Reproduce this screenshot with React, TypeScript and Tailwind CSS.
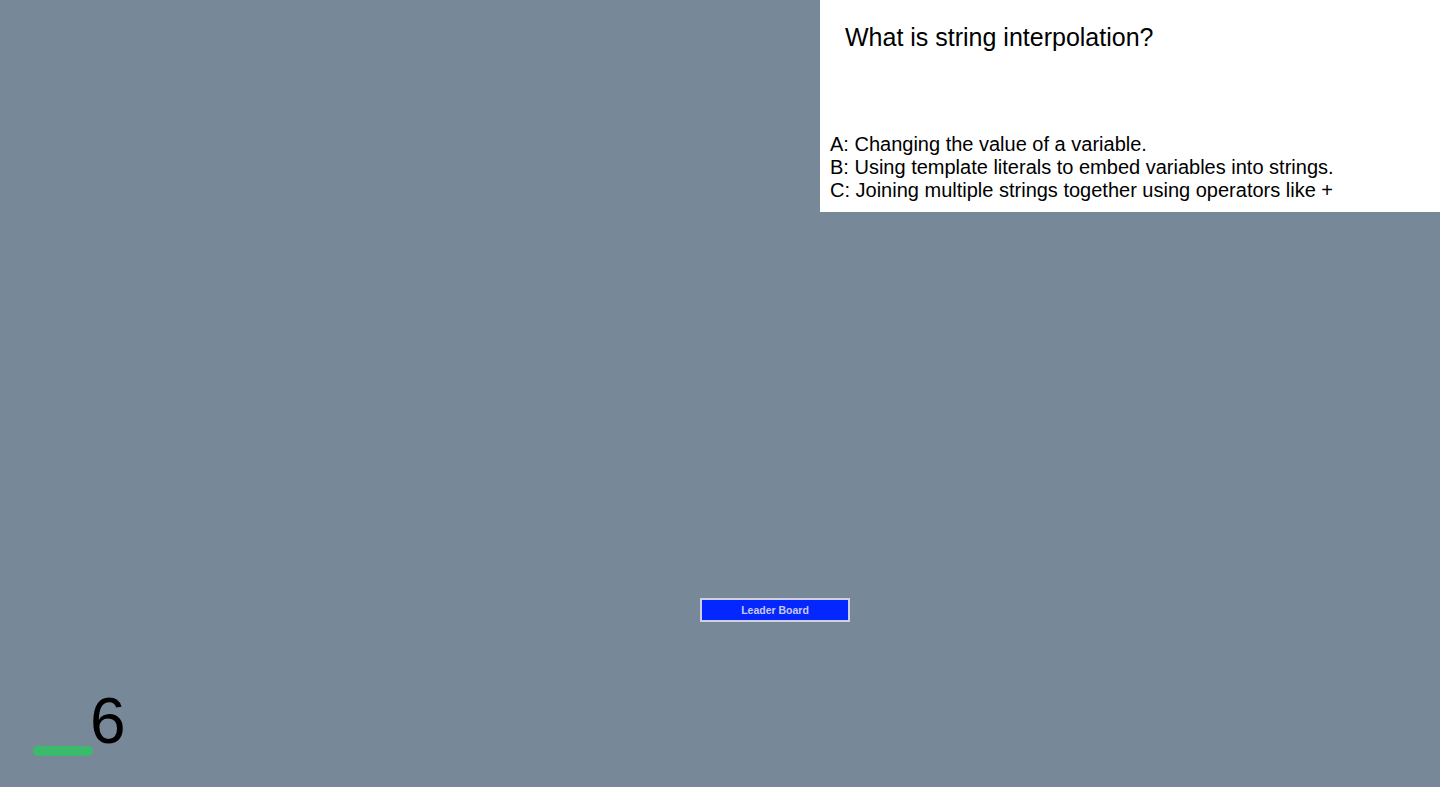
export default function App() {
  const options = [
    'A: Changing the value of a variable.',
    'B: Using template literals to embed variables into strings.',
    'C: Joining multiple strings together using operators like +',
  ];

  return (
    <div className="flex h-[787px] w-full flex-col overflow-hidden bg-[#778899] font-['Liberation_Sans',Arial,sans-serif] text-black">
      <div className="flex justify-end">
        <div className="flex h-[212px] w-[620px] flex-col bg-white">
          <h1 className="pl-[25px] pt-[23px] text-[25px] leading-[1.15]">What is string interpolation?</h1>
          <div className="mt-auto pb-[10px] pl-[10px] text-[20px] leading-[23px]">
            {options.map((opt) => (
              <p key={opt}>{opt}</p>
            ))}
          </div>
        </div>
      </div>

      <div className="ml-[700px] mt-[386px]">
        <button className="block h-[24px] w-[150px] border-2 border-[#d0d0e4] bg-[#0527ff] text-[10.5px] font-bold leading-none text-[#c9c9ee]">
          Leader Board
        </button>
      </div>

      <div className="mt-auto flex items-end pb-[31px] pl-[33px]">
        <div className="h-[10px] w-[60px] rounded-full bg-[#3cba6c]" />
        <span className="-ml-[3px] mb-[3px] text-[64px] leading-none">6</span>
      </div>
    </div>
  );
}
